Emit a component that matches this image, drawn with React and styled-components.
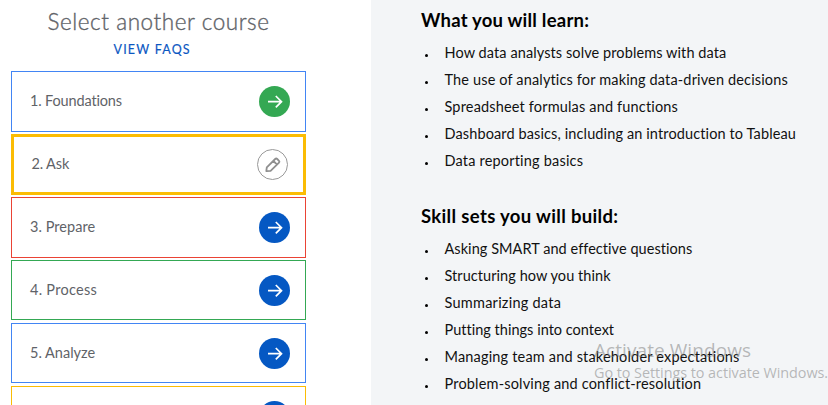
import React from "react";
import styled, { createGlobalStyle } from "styled-components";

const GlobalStyle = createGlobalStyle`
  * { box-sizing: border-box; }
  body { margin: 0; background: #fff; font-family: Lato, "Open Sans", sans-serif; overflow: hidden; }
`;

const Page = styled.div`
  position: relative;
  display: grid;
  grid-template-columns: 371px 1fr;
  width: 828px;
  height: 405px;
  overflow: hidden;
`;

const CoursePanel = styled.section`
  display: flex;
  flex-direction: column;
  padding-left: 11px;
  overflow: hidden;
`;

const PanelTitle = styled.h1`
  margin: 7px 0 0;
  padding-left: 36.5px;
  font-size: 22.5px;
  line-height: 30px;
  font-weight: 300;
  letter-spacing: 0.56px;
  color: #5f6368;
  -webkit-text-stroke: 0.35px #5f6368;
  white-space: nowrap;
`;

const FaqLink = styled.a`
  margin: 3px 0 11px;
  padding-left: 102.5px;
  font-size: 12.5px;
  line-height: 20px;
  letter-spacing: 1.2px;
  color: #0b57c2;
  -webkit-text-stroke: 0.15px #0b57c2;
`;

const CourseList = styled.div`
  display: grid;
  grid-auto-rows: 63px;
  width: 295px;
`;

const Course = styled.div`
  display: flex;
  align-items: center;
  justify-content: space-between;
  height: ${(p) => p.$height}px;
  padding: 0 15px 0 ${(p) => (p.$selected ? 17.5 : 18)}px;
  border: ${(p) => (p.$selected ? 3 : 1)}px solid ${(p) => p.$color};
`;

const CourseName = styled.span`
  padding-bottom: 1px;
  font-size: 14.5px;
  line-height: 20px;
  letter-spacing: ${(p) => p.$spacing}px;
  color: #5f6368;
`;

const Badge = styled.span`
  display: flex;
  align-items: center;
  justify-content: center;
  width: 31px;
  height: 31px;
  border-radius: 50%;
  color: ${(p) => (p.$color ? "#fff" : "#8f8f8f")};
  background: ${(p) => p.$color || "#fff"};
  border: ${(p) => (p.$color ? "0" : "1px solid #999")};
`;

const Details = styled.section`
  padding: 8px 0 0 50px;
  background: #f3f5f7;
  overflow: hidden;
`;

const Heading = styled.h2`
  margin: 0;
  font-size: 18.5px;
  line-height: 24px;
  font-weight: 700;
  letter-spacing: ${(p) => p.$spacing}px;
  color: #000;
  white-space: nowrap;
`;

const Topics = styled.ul`
  margin: 7px 0 30px;
  padding: 0;
  list-style: none;
`;

const Topic = styled.li`
  display: flex;
  align-items: center;
  height: 27px;
  font-size: 14.5px;
  letter-spacing: ${(p) => p.$spacing}px;
  color: #111;
  white-space: nowrap;

  &::before {
    content: "";
    width: 3px;
    height: 3px;
    margin: 6px 17px 0 3.5px;
    border-radius: 50%;
    background: #000;
  }
`;

const Watermark = styled.div`
  position: absolute;
  left: 594px;
  top: 338px;
  font-family: "Open Sans", "Noto Sans", sans-serif;
  color: rgba(120, 120, 120, 0.5);
  white-space: nowrap;
  pointer-events: none;
`;

const WatermarkTitle = styled.div`
  font-size: 19px;
  line-height: 24px;
  letter-spacing: 0.07px;
`;

const WatermarkText = styled.div`
  font-size: 14.4px;
  line-height: 21px;
  letter-spacing: -0.05px;
`;

const Arrow = () => (
  <svg width="31" height="31" viewBox="0 0 31 31" fill="none" stroke="currentColor" strokeWidth="1.7">
    <path d="M9 15.7H22.3M16.8 10L22.5 15.7L16.8 21.4" />
  </svg>
);

const Pencil = () => (
  <svg width="29" height="29" viewBox="0 0 29 29" fill="none" stroke="currentColor" strokeWidth="1.8" strokeLinejoin="round">
    <path d="M8.3 21.2L8.8 17.4L17.2 9Q18.2 8 19.2 9L21 10.8Q21.9 11.8 21 12.7L12.6 20.8ZM15.4 11L19.1 14.6" />
  </svg>
);

const GREEN = "#34a853";
const BLUE = "#0558c3";

const courses = [
  { name: "1. Foundations", color: "#4285f4", badge: GREEN, height: 61, spacing: -0.15 },
  { name: "2. Ask", color: "#fbbc04", height: 61, spacing: -0.15, selected: true },
  { name: "3. Prepare", color: "#ea4335", badge: BLUE, height: 61, spacing: 0.05 },
  { name: "4. Process", color: "#34a853", badge: BLUE, height: 60, spacing: 0.27 },
  { name: "5. Analyze", color: "#4285f4", badge: BLUE, height: 60, spacing: 0 },
  { name: "", color: "#fbbc04", badge: BLUE, height: 61, spacing: 0 },
];

const sections = [
  {
    title: "What you will learn:",
    spacing: 0.22,
    topics: [
      ["How data analysts solve problems with data", 0.09],
      ["The use of analytics for making data-driven decisions", 0.15],
      ["Spreadsheet formulas and functions", 0.165],
      ["Dashboard basics, including an introduction to Tableau", 0.12],
      ["Data reporting basics", 0.19],
    ],
  },
  {
    title: "Skill sets you will build:",
    spacing: 0.34,
    topics: [
      ["Asking SMART and effective questions", 0.05],
      ["Structuring how you think", 0.06],
      ["Summarizing data", 0.25],
      ["Putting things into context", 0.02],
      ["Managing team and stakeholder expectations", 0.18],
      ["Problem-solving and conflict-resolution", 0.18],
    ],
  },
];

export default function App() {
  return (
    <Page>
      <GlobalStyle />
      <CoursePanel>
        <PanelTitle>Select another course</PanelTitle>
        <FaqLink>VIEW FAQS</FaqLink>
        <CourseList>
          {courses.map((c, i) => (
            <Course key={i} $color={c.color} $height={c.height} $selected={c.selected}>
              <CourseName $spacing={c.spacing}>{c.name}</CourseName>
              <Badge $color={c.badge}>{c.selected ? <Pencil /> : <Arrow />}</Badge>
            </Course>
          ))}
        </CourseList>
      </CoursePanel>
      <Details>
        {sections.map((s) => (
          <React.Fragment key={s.title}>
            <Heading $spacing={s.spacing}>{s.title}</Heading>
            <Topics>
              {s.topics.map(([text, spacing]) => (
                <Topic key={text} $spacing={spacing}>{text}</Topic>
              ))}
            </Topics>
          </React.Fragment>
        ))}
      </Details>
      <Watermark>
        <WatermarkTitle>Activate Windows</WatermarkTitle>
        <WatermarkText>Go to Settings to activate Windows.</WatermarkText>
      </Watermark>
    </Page>
  );
}
